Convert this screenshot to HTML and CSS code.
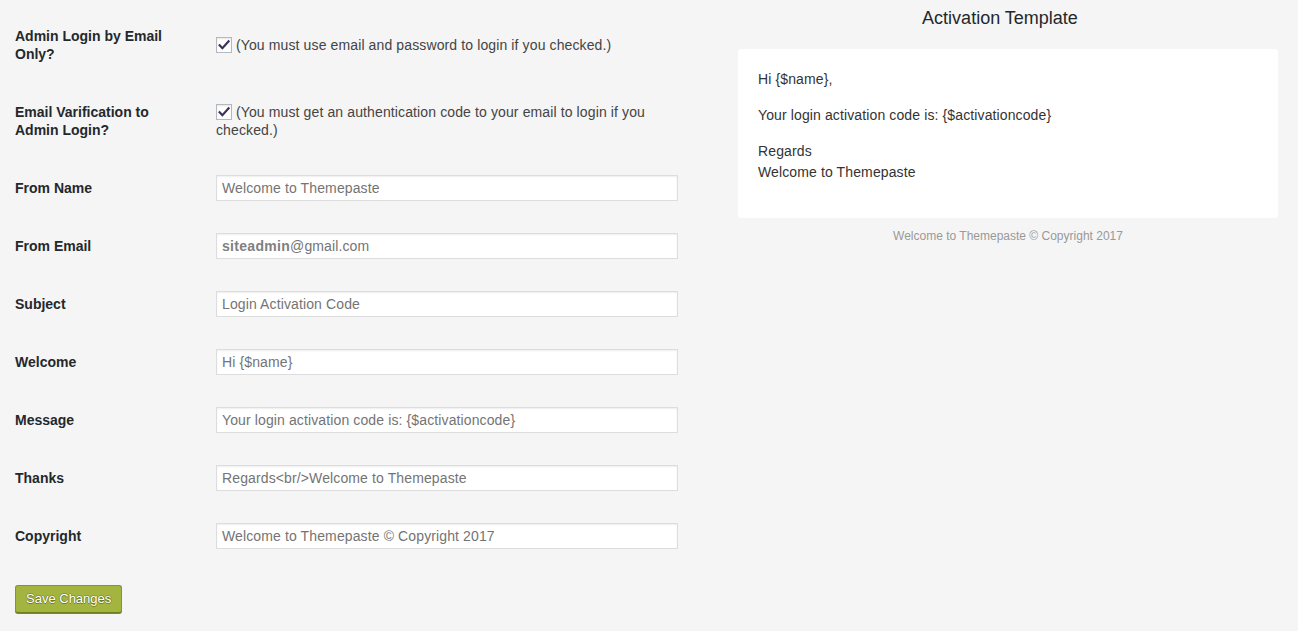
FILE: index.html
```html
<!DOCTYPE html>
<html>
<head>
<meta charset="utf-8">
<title>Activation Settings</title>
<link rel="stylesheet" href="styles.css">
</head>
<body>
<div class="page">
  <form class="settings">
    <div class="row row-tall">
      <div class="label">Admin Login by Email Only?</div>
      <div class="field">
        <span class="checkbox"><svg viewBox="0 0 16 16" width="16" height="16"><path d="M3.6 8.2 L6.4 11.2 L12.6 4.3" fill="none" stroke="#3a3156" stroke-width="2.1" stroke-linecap="square" stroke-linejoin="miter"/></svg></span> (You must use email and password to login if you checked.)
      </div>
    </div>
    <div class="row row-tall">
      <div class="label">Email Varification to Admin Login?</div>
      <div class="field">
        <span class="checkbox"><svg viewBox="0 0 16 16" width="16" height="16"><path d="M3.6 8.2 L6.4 11.2 L12.6 4.3" fill="none" stroke="#3a3156" stroke-width="2.1" stroke-linecap="square" stroke-linejoin="miter"/></svg></span> (You must get an authentication code to your email to login if you checked.)
      </div>
    </div>
    <div class="row">
      <div class="label">From Name</div>
      <div class="field"><input class="text" type="text" value="Welcome to Themepaste"></div>
    </div>
    <div class="row">
      <div class="label">From Email</div>
      <div class="field"><div class="text fake"><span class="auto">siteadmin</span>@gmail.com</div></div>
    </div>
    <div class="row">
      <div class="label">Subject</div>
      <div class="field"><input class="text" type="text" value="Login Activation Code"></div>
    </div>
    <div class="row">
      <div class="label">Welcome</div>
      <div class="field"><input class="text" type="text" value="Hi {$name}"></div>
    </div>
    <div class="row">
      <div class="label">Message</div>
      <div class="field"><input class="text" type="text" value="Your login activation code is: {$activationcode}"></div>
    </div>
    <div class="row">
      <div class="label">Thanks</div>
      <div class="field"><input class="text" type="text" value="Regards&lt;br/&gt;Welcome to Themepaste"></div>
    </div>
    <div class="row">
      <div class="label">Copyright</div>
      <div class="field"><input class="text" type="text" value="Welcome to Themepaste © Copyright 2017"></div>
    </div>
    <div class="submit">
      <button type="button" class="button">Save Changes</button>
    </div>
  </form>
  <aside class="preview">
    <h2 class="preview-title">Activation Template</h2>
    <div class="preview-box">
      <p>Hi {$name},</p>
      <p>Your login activation code is: {$activationcode}</p>
      <p>Regards<br>Welcome to Themepaste</p>
    </div>
    <div class="preview-footer">Welcome to Themepaste © Copyright 2017</div>
  </aside>
</div>
</body>
</html>
```

FILE: styles.css
```css
html, body {
  margin: 0;
  padding: 0;
  background: #f5f5f5;
}
body {
  font-family: "Liberation Sans", Arial, sans-serif;
  font-size: 14px;
  color: #444;
  min-height: 631px;
}
.page {
  display: flex;
  align-items: flex-start;
  padding: 7px 20px 0 15px;
}
.settings {
  width: 673px;
  flex: none;
}
.row {
  display: grid;
  grid-template-columns: 201px 472px;
  height: 58px;
}
.row-tall {
  height: 76px;
}
.label {
  padding: 20px 26px 20px 0;
  box-sizing: border-box;
  width: 201px;
  line-height: 18px;
  font-weight: bold;
  color: #23282d;
}
.field {
  align-self: center;
  line-height: 18px;
  color: #444;
  padding-right: 10px;
  letter-spacing: 0.12px;
}
.checkbox {
  display: inline-block;
  width: 16px;
  height: 16px;
  box-sizing: border-box;
  border: 1px solid #b4b9be;
  background: #fff;
  box-shadow: inset 0 1px 2px rgba(0,0,0,0.1);
  vertical-align: -3px;
  position: relative;
}
.checkbox svg {
  position: absolute;
  left: -1px;
  top: -1px;
}
.text {
  display: block;
  box-sizing: border-box;
  width: 462px;
  height: 26px;
  margin: 0;
  padding: 0 5px;
  border: 1px solid #ddd;
  box-shadow: inset 0 1px 2px rgba(0,0,0,0.07);
  background: #fff;
  font-family: "Liberation Sans", Arial, sans-serif;
  font-size: 14px;
  letter-spacing: 0.12px;
  color: #747474;
  line-height: 24px;
  outline: none;
}
.fake .auto {
  font-weight: bold;
  letter-spacing: 0.3px;
  color: #808080;
}
.submit {
  padding-top: 20px;
}
.button {
  display: block;
  height: 28px;
  padding: 0 10px 1px;
  border: 1px solid #84952c;
  border-bottom-color: #6f7e22;
  border-radius: 3px;
  background: #a4b53f;
  color: #fff;
  font-family: "Liberation Sans", Arial, sans-serif;
  font-size: 13px;
  line-height: 24px;
  text-shadow: 0 1px 0 rgba(80, 90, 20, 0.6), 0 -1px 0 rgba(80, 90, 20, 0.35), 1px 0 0 rgba(80, 90, 20, 0.35), -1px 0 0 rgba(80, 90, 20, 0.35);
  box-shadow: 0 1px 0 #7a8a28;
  cursor: pointer;
}
.preview {
  width: 540px;
  margin-left: 50px;
  flex: none;
  margin-top: -7px;
}
.preview-title {
  margin: 0;
  padding: 6px 16px 0 0;
  height: 49px;
  box-sizing: border-box;
  text-align: center;
  font-size: 18px;
  font-weight: normal;
  line-height: 24px;
  color: #23282d;
}
.preview-box {
  background: #fff;
  border-radius: 3px;
  padding: 20px 20px 20px;
  color: #333;
  font-size: 14px;
  line-height: 21px;
  letter-spacing: 0.12px;
}
.preview-box p {
  margin: 0 0 15px;
}
.preview-footer {
  margin-top: 10px;
  text-align: center;
  font-size: 12px;
  line-height: 16px;
  color: #999;
}
```
